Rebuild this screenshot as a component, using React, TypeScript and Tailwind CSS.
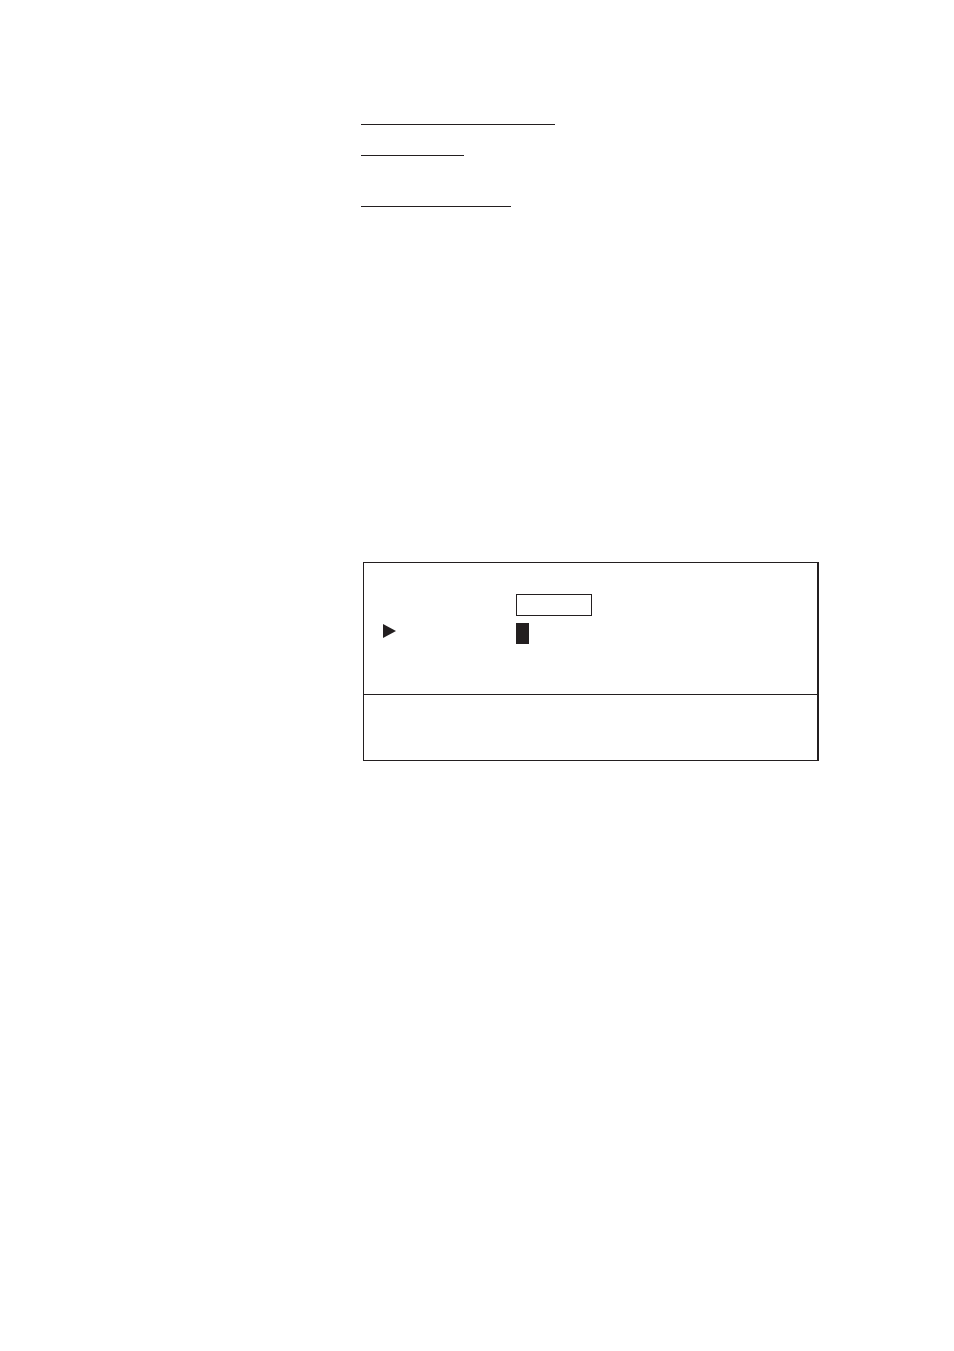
function Rule({ className }: { className: string }) {
  return <hr className={`h-px border-0 bg-[#231f20] ${className}`} />;
}

function Pointer() {
  return (
    <svg viewBox="0 0 13 14" className="h-3.5 w-[13px] fill-[#231f20]" aria-hidden="true">
      <path d="M0 0 L13 7 L0 14 Z" />
    </svg>
  );
}

function DisplayPanel() {
  return (
    <section className="border border-r-2 border-[#231f20]">
      <div className="flex flex-col gap-[7px] border-b border-[#231f20] pt-[31px] pb-[50px] pl-[19px]">
        <div className="grid grid-cols-[133px_1fr]">
          <input
            type="text"
            aria-label="Value"
            className="col-start-2 h-[22px] w-[76px] border border-[#231f20] bg-white px-1 font-['Liberation_Sans',sans-serif] text-sm outline-none"
          />
        </div>
        <div className="grid grid-cols-[133px_1fr] items-start">
          <div className="pt-px">
            <Pointer />
          </div>
          <span className="h-[21px] w-[13px] bg-[#231f20]" />
        </div>
      </div>
      <div className="min-h-[65px]" />
    </section>
  );
}

export default function App() {
  return (
    <main className="min-h-screen bg-white pt-[124px] pr-[135px] pl-[361px]">
      <header className="flex flex-col">
        <Rule className="w-[194px]" />
        <Rule className="mt-[30px] w-[103px]" />
        <Rule className="mt-[50px] w-[150px]" />
      </header>
      <div className="mt-[355px] pl-0.5">
        <DisplayPanel />
      </div>
    </main>
  );
}
